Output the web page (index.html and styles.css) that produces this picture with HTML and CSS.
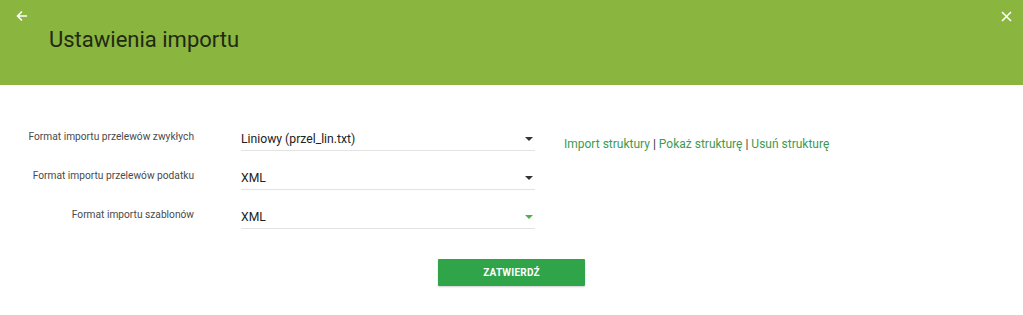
FILE: index.html
```html
<!DOCTYPE html>
<html lang="pl">
<head>
<meta charset="utf-8">
<title>Ustawienia importu</title>
<link rel="stylesheet" href="styles.css">
</head>
<body>
<header class="header">
  <div class="header-bar">
    <button class="icon-btn back" aria-label="Wstecz">
      <svg width="12" height="12" viewBox="0 0 12 12"><path d="M11 6H2M6 1.5L1.5 6 6 10.5" fill="none" stroke="#fff" stroke-width="1.6"/></svg>
    </button>
    <button class="icon-btn close" aria-label="Zamknij">
      <svg width="11" height="11" viewBox="0 0 11 11"><path d="M1 1L10 10M10 1L1 10" fill="none" stroke="#fff" stroke-width="1.6"/></svg>
    </button>
  </div>
  <h1 class="title">Ustawienia importu</h1>
</header>
<main class="content">
  <div class="form">
    <div class="rows">
      <div class="row">
        <label class="label">Format importu przelewów zwykłych</label>
        <div class="select"><span class="value">Liniowy (przel_lin.txt)</span><span class="caret"></span></div>
      </div>
      <div class="row">
        <label class="label">Format importu przelewów podatku</label>
        <div class="select"><span class="value">XML</span><span class="caret"></span></div>
      </div>
      <div class="row">
        <label class="label">Format importu szablonów</label>
        <div class="select"><span class="value">XML</span><span class="caret caret-green"></span></div>
      </div>
    </div>
    <div class="links">
      <a class="link" href="#">Import struktury</a> <span class="sep">|</span> <a class="link" href="#">Pokaż strukturę</a> <span class="sep">|</span> <a class="link" href="#">Usuń strukturę</a>
    </div>
  </div>
  <div class="actions">
    <button class="submit">ZATWIERDŹ</button>
  </div>
</main>
</body>
</html>
```
FILE: styles.css
```css
* { box-sizing: border-box; }
html, body { margin: 0; padding: 0; background: #fff; }
body { font-family: Roboto, "Noto Sans", sans-serif; color: #333; width: 1023px; height: 315px; overflow: hidden; }

.header { background: #8ab53f; height: 85px; padding: 0; }
.header-bar { display: flex; justify-content: space-between; padding: 10px 10px 0 15px; height: 22px; }
.icon-btn { background: none; border: 0; padding: 0; width: 13px; height: 12px; display: flex; align-items: center; justify-content: center; cursor: pointer; }
.title { margin: 4px 0 0 49px; font-size: 22px; font-weight: 400; color: #1f2a12; line-height: 28px; }

.content { padding-top: 40px; }
.form { display: flex; align-items: flex-start; }
.rows { display: flex; flex-direction: column; gap: 0; }
.row { display: flex; align-items: flex-start; height: 39px; }
.label { width: 194px; text-align: right; font-size: 10.2px; color: #4a4a4a; padding-top: 5px; line-height: 14px; }
.select { margin-left: 47px; width: 294px; height: 26px; border-bottom: 1px solid #e3e3e3; display: flex; align-items: center; justify-content: space-between; padding-top: 2px; }
.value { font-size: 12.2px; color: #222; }
.caret { width: 0; height: 0; border-left: 4px solid transparent; border-right: 4px solid transparent; border-top: 4px solid #333; margin-right: 2px; }
.caret-green { border-top-color: #4caf50; }

.links { margin-left: 29px; padding-top: 12px; font-size: 12px; color: #333; }
.link { color: #3e9a52; text-decoration: none; }
.sep { color: #333; }

.actions { display: flex; justify-content: center; padding-top: 17px; }
.submit { width: 147px; height: 27px; background: #30a449; color: #fff; border: 0; border-radius: 1px; font-family: Roboto, sans-serif; font-size: 10px; font-weight: 700; letter-spacing: 0.2px; box-shadow: 0 1px 2px rgba(0,0,0,0.2); }
```
